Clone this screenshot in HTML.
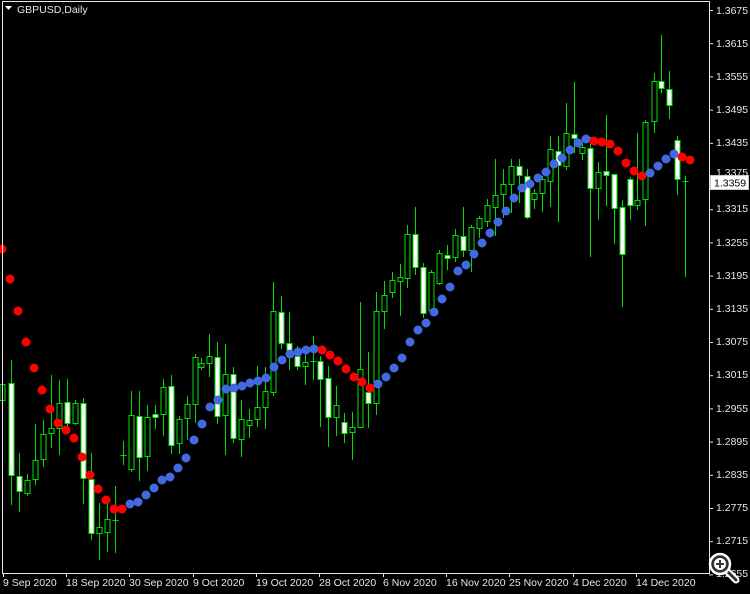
<!DOCTYPE html>
<html><head><meta charset="utf-8"><style>
html,body{margin:0;padding:0;background:#000;width:750px;height:594px;overflow:hidden}
svg{display:block}
text{font-family:"Liberation Sans",sans-serif;font-size:10.5px;fill:#e6e6e6}
</style></head><body>
<svg id="s" width="750" height="594" xmlns="http://www.w3.org/2000/svg">
<rect width="750" height="594" fill="#000"/>
<g id="c"></g>
<g id="d"></g>
<path d="M2.5 1.5H709.5V573.5H2.5Z" fill="none" stroke="#e8e8e8" stroke-width="1"/>
<path d="M5 6h7l-3.5 4z" fill="#fff"/>
<text x="17" y="13">GBPUSD,Daily</text>
<g id="pt"></g>
<g>
<text x="716" y="14">1.3675</text>
<text x="716" y="47">1.3615</text>
<text x="716" y="80">1.3555</text>
<text x="716" y="113">1.3495</text>
<text x="716" y="146">1.3435</text>
<text x="716" y="176">1.3375</text>
<text x="716" y="212">1.3315</text>
<text x="716" y="246">1.3255</text>
<text x="716" y="279">1.3195</text>
<text x="716" y="312">1.3135</text>
<text x="716" y="345">1.3075</text>
<text x="716" y="378">1.3015</text>
<text x="716" y="412">1.2955</text>
<text x="716" y="445">1.2895</text>
<text x="716" y="478">1.2835</text>
<text x="716" y="511">1.2775</text>
<text x="716" y="544">1.2715</text>
<text x="716" y="577">1.2655</text>
</g>
<rect x="710.5" y="175.5" width="38" height="14" fill="#fff" stroke="#ccc"/>
<text x="714" y="186.5" style="fill:#000">1.3359</text>
<g>
<text x="3" y="586">9 Sep 2020</text>
<text x="66" y="586">18 Sep 2020</text>
<text x="129" y="586">30 Sep 2020</text>
<text x="193" y="586">9 Oct 2020</text>
<text x="256" y="586">19 Oct 2020</text>
<text x="319" y="586">28 Oct 2020</text>
<text x="383" y="586">6 Nov 2020</text>
<text x="446" y="586">16 Nov 2020</text>
<text x="509" y="586">25 Nov 2020</text>
<text x="573" y="586">4 Dec 2020</text>
<text x="636" y="586">14 Dec 2020</text>
</g>
<g id="dt"></g>
<g>
<path d="M727 571l9 9" stroke="#fff" stroke-width="7" stroke-linecap="round"/>
<path d="M727 571l9 9" stroke="#333" stroke-width="3" stroke-linecap="round"/>
<circle cx="720" cy="564" r="10" fill="#333" stroke="#fff" stroke-width="2.5"/>
<circle cx="720" cy="564" r="6" fill="#fff"/>
<path d="M716 564h8M720 560v8" stroke="#333" stroke-width="2"/>
</g>
</svg>
<script>
var C=[
[2,366,384,400,443,'g'],[11,360,383,475,505,'w'],[19,453,476,491,512,'w'],[27,474,480,493,496,'g'],
[35,424,460,479,485,'g'],[43,420,434,459,467,'g'],[51,375,428,433,448,'g'],[59,380,403,428,455,'g'],
[67,379,402,423,429,'w'],[75,400,403,423,425,'g'],[83,398,403,478,504,'w'],[91,453,479,533,540,'w'],
[99,503,527,533,560,'g'],[107,498,519,532,552,'g'],[115,486,520,520,553,'x'],[123,441,455,455,465,'x'],
[131,391,415,469,472,'g'],[139,391,416,457,481,'w'],[147,405,417,456,471,'g'],[155,405,414,417,429,'w'],
[163,379,387,414,436,'g'],[171,375,386,445,454,'w'],[179,416,419,443,454,'g'],[187,396,404,418,440,'g'],
[195,354,357,404,423,'g'],[201,358,363,367,370,'g'],[209,334,356,363,377,'g'],[217,342,357,416,424,'w'],
[225,344,374,415,455,'g'],[233,367,374,438,443,'w'],[241,400,419,439,457,'g'],[249,409,420,425,438,'g'],
[257,366,407,419,427,'g'],[265,367,391,407,429,'g'],[273,282,311,392,396,'g'],[281,296,312,343,349,'w'],
[289,312,343,352,370,'w'],[297,346,356,366,370,'w'],[305,353,362,366,385,'g'],[313,336,361,361,380,'x'],
[320,356,361,379,427,'w'],[328,366,378,417,447,'w'],[336,386,405,417,436,'g'],[344,413,422,433,443,'w'],
[352,412,427,432,460,'g'],[360,302,369,427,427,'g'],[368,352,392,403,428,'w'],[376,292,311,403,415,'g'],
[384,281,295,311,329,'g'],[392,272,280,292,298,'g'],[400,264,277,281,316,'g'],[407,225,234,278,288,'g'],
[415,207,234,267,275,'w'],[423,263,267,313,318,'w'],[431,270,272,310,313,'g'],[439,250,253,283,285,'g'],
[447,245,255,258,270,'w'],[455,229,235,257,262,'g'],[463,207,236,250,257,'w'],[471,225,227,250,272,'g'],
[479,216,218,228,238,'g'],[487,199,205,221,227,'g'],[495,159,195,207,236,'g'],[503,169,184,194,218,'g'],
[511,159,166,184,213,'g'],[519,159,166,175,203,'w'],[527,169,176,217,219,'w'],[534,189,193,199,209,'g'],
[542,176,179,193,212,'g'],[550,136,149,181,207,'g'],[558,136,151,165,222,'w'],[566,103,133,166,170,'g'],
[574,82,134,138,153,'w'],[582,143,147,153,160,'g'],[590,137,148,188,257,'w'],[598,162,172,188,220,'g'],
[606,115,171,175,206,'w'],[614,174,174,208,244,'w'],[622,200,207,254,307,'w'],[630,177,179,205,220,'w'],
[637,133,200,205,210,'g'],[645,120,122,199,226,'g'],[654,73,81,121,133,'g'],[661,35,81,88,93,'w'],
[669,71,89,105,119,'w'],[677,136,140,179,195,'w'],[685,176,181,181,277,'x']];
var D=[249,279,311,342,368,390,409,423,430,438,457,475,489,500,509,509,504,502,495,488,480,477,468,458,440,424,407,400,389,388,386,383,381,378,367,360,354,352,350,349,350,355,361,369,377,382,388,384,377,368,358,342,330,323,312,299,287,271,265,254,243,233,222,211,198,188,184,178,172,164,158,150,143,139,141,142,144,151,163,171,176,173,166,159,154,157,160];
var R=[[0,15],[40,46],[74,80],[85,86]];
function red(i){return R.some(function(r){return i>=r[0]&&i<=r[1]});}
var G='#00e000',h='';
C.forEach(function(c){var x=c[0]+0.5;
h+='<line x1="'+x+'" x2="'+x+'" y1="'+c[1]+'" y2="'+c[4]+'" stroke="'+G+'"/>';
if(c[5]=='x'){h+='<line x1="'+(x-3)+'" x2="'+(x+3)+'" y1="'+(c[2]+.5)+'" y2="'+(c[2]+.5)+'" stroke="'+G+'"/>';}
else{var hh=Math.max(c[3]-c[2],2);h+='<rect x="'+(x-2.5)+'" y="'+(c[2]+.5)+'" width="5" height="'+hh+'" fill="'+(c[5]=='w'?'#fff':'#000')+'" stroke="'+G+'"/>';}
});
document.getElementById('c').innerHTML=h;
h='';D.forEach(function(y,i){h+='<circle cx="'+(2+8*i)+'" cy="'+y+'" r="4.5" fill="'+(red(i)?'#ff0000':'#4169e1')+'"/>';});
document.getElementById('d').innerHTML=h;
h='';for(var k=0;k<18;k++){var y=10.5+33.2*k;h+='<line x1="709" x2="713" y1="'+y+'" y2="'+y+'" stroke="#e8e8e8"/>';}
document.getElementById('pt').innerHTML=h;
h='';[3,66,129,193,256,319,383,446,509,573,636].forEach(function(x){h+='<line x1="'+(x+.5)+'" x2="'+(x+.5)+'" y1="573" y2="577" stroke="#e8e8e8"/>';});
document.getElementById('dt').innerHTML=h;
</script>
</body></html>
